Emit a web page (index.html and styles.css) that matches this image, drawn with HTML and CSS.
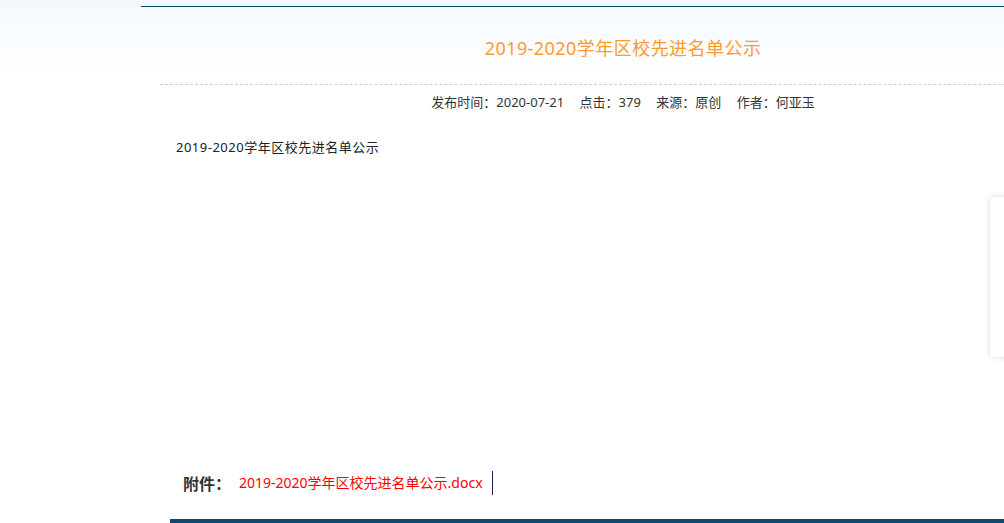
FILE: index.html
```html
<!DOCTYPE html>
<html lang="zh-CN">
<head>
    <meta charset="UTF-8">
    <meta name="viewport" content="width=device-width, initial-scale=1.0">
    <title>2019-2020学年区校先进名单公示</title>
    <link rel="stylesheet" href="styles.css">
</head>
<body>
    <div class="page">
        <div class="article">
            <h1 class="title">2019-2020学年区校先进名单公示</h1>
            <div class="meta">
                <span>发布时间：2020-07-21</span>
                <span>点击：379</span>
                <span>来源：原创</span>
                <span>作者：何亚玉</span>
            </div>
            <div class="content">
                <p>2019-2020学年区校先进名单公示</p>
            </div>
            <div class="attach">
                <b>附件：</b>
                <a href="#">2019-2020学年区校先进名单公示.docx</a>
            </div>
        </div>
        <div class="bottom-bar"></div>
    </div>
    <div class="side-box"></div>
</body>
</html>
```

FILE: styles.css
```css
*{
    margin: 0;
    padding: 0;
    box-sizing: border-box;
}
html, body{
    height: 100%;
    overflow: hidden;
}
body{
    font-family: "Noto Sans", "Noto Sans CJK SC", sans-serif;
    color: #333;
    background: linear-gradient(#f3f9ff, #ffffff 75px) no-repeat;
}
.page{
    margin-top: 6px;
    margin-left: 141px;
    width: 1000px;
    border-top: 1px solid #064a7c;
}
.article{
    margin-left: 19px;
    width: 926px;
}
.title{
    padding: 26px 0 21px;
    font-size: 18px;
    font-weight: normal;
    line-height: 30px;
    letter-spacing: 0.45px;
    text-align: center;
    color: #ff9a2b;
    border-bottom: 1px dashed #cccccc;
}
.meta{
    margin-top: 5px;
    font-size: 13px;
    line-height: 24px;
    text-align: center;
    color: #333;
}
.meta span{
    margin: 0 6px;
}
.content{
    margin-top: 21px;
    padding-left: 16px;
    height: 336px;
    font-size: 13px;
    line-height: 24px;
    letter-spacing: 0.5px;
    color: #222;
}
.attach{
    padding-left: 23px;
    display: flex;
    align-items: center;
    height: 24px;
}
.attach b{
    font-size: 16px;
    color: #333;
    margin-right: 8px;
}
.attach a{
    font-size: 14px;
    color: #ff0000;
    text-decoration: none;
    padding-right: 9px;
    border-right: 1px solid #14214f;
    line-height: 24px;
}
.bottom-bar{
    margin-top: 24px;
    margin-left: 29px;
    height: 6px;
    background-color: #0c4a71;
}
.side-box{
    position: fixed;
    top: 197px;
    right: -20px;
    width: 34px;
    height: 160px;
    background: #fff;
    border-radius: 4px;
    box-shadow: 0 0 6px rgba(0,0,0,0.15);
}
```
